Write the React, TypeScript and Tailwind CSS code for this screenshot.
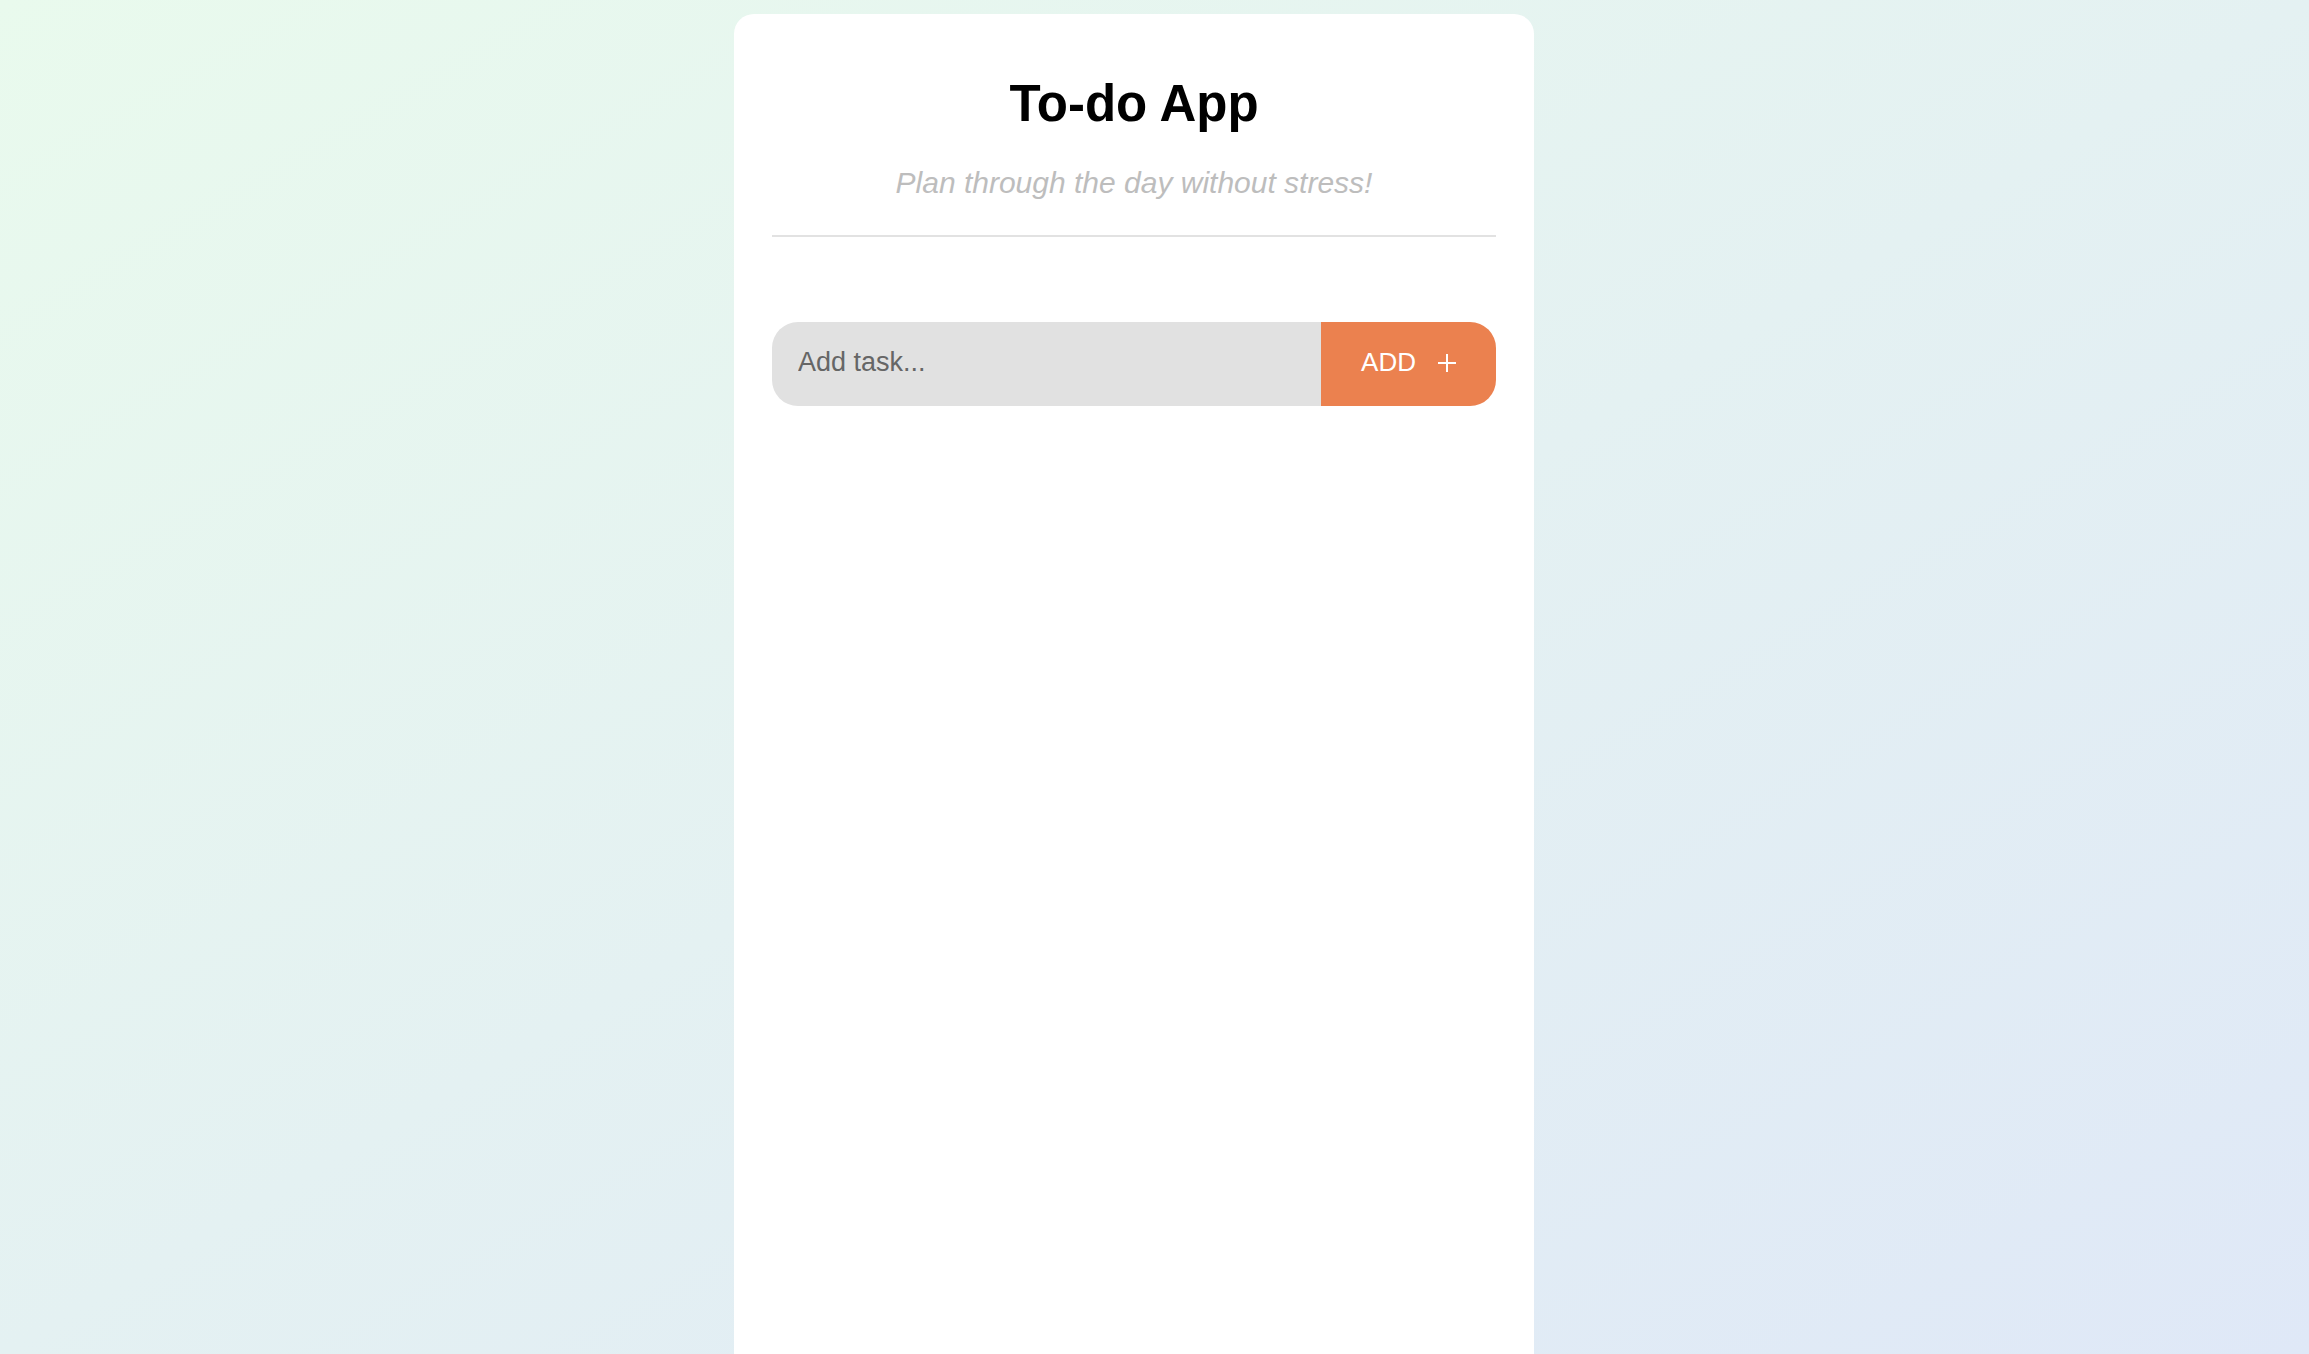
import { useState } from "react";

export default function App() {
  const [task, setTask] = useState("");

  return (
    <div
      className="h-screen overflow-hidden flex justify-center pt-[14px] pr-[41px] bg-[linear-gradient(to_bottom_right,#e9faed,#dfe8f7)]"
      style={{ fontFamily: '"Liberation Sans", Arial, sans-serif' }}
    >
      <main className="w-[800px] h-[1400px] shrink-0 bg-white rounded-[20px] px-[38px] pt-[64px]">
        <h1 className="text-[51px] leading-none font-bold text-black text-center">
          To-do App
        </h1>
        <p className="mt-[39px] text-[30px] leading-none italic text-[#bdbdbd] text-center">
          Plan through the day without stress!
        </p>
        <div className="mt-[37px] h-[2px] bg-[#e2e2e2]" />

        <div className="mt-[85px] flex h-[84px] rounded-[26px] overflow-hidden">
          <input
            value={task}
            onChange={(e) => setTask(e.target.value)}
            placeholder="Add task..."
            className="flex-1 min-w-0 bg-[#e1e1e1] pl-[26px] pb-[3px] text-[27px] text-[#333] placeholder:text-[#666] outline-none"
          />
          <button className="w-[175px] shrink-0 bg-[#eb814f] text-white text-[26px] pb-[3px] flex items-center justify-center">
            ADD
            <svg
              width="18"
              height="18"
              viewBox="0 0 18 18"
              className="ml-[22px]"
              stroke="currentColor"
              strokeWidth="2"
              fill="none"
            >
              <path d="M0 9h18M9 0v18" />
            </svg>
          </button>
        </div>
      </main>
    </div>
  );
}
